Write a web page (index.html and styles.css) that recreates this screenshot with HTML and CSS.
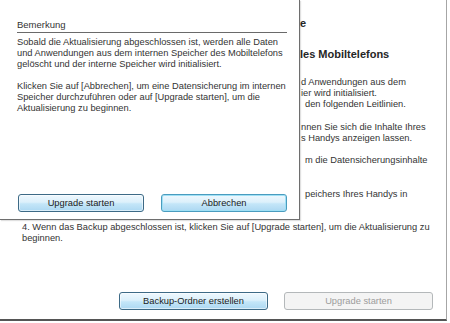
FILE: index.html
```html
<!DOCTYPE html>
<html lang="de">
<head>
<meta charset="utf-8">
<title>Upgrade</title>
<link rel="stylesheet" href="styles.css">
</head>
<body>
<div class="window">
  <div class="bg">
    <div class="title frag-t">e</div>
    <div class="heading frag-t">les Mobiltelefons</div>
    <div class="lines">
      <div class="frag">d Anwendungen aus dem</div>
      <div class="frag">ier wird initialisiert.</div>
      <div class="frag frag-in">den folgenden Leitlinien.</div>
      <div class="blank">&nbsp;</div>
      <div class="frag">nnen Sie sich die Inhalte Ihres</div>
      <div class="frag">s Handys anzeigen lassen.</div>
      <div class="blank">&nbsp;</div>
      <div class="frag frag-in">m die Datensicherungsinhalte</div>
      <div class="blank">&nbsp;</div>
      <div class="blank">&nbsp;</div>
      <div class="frag frag-in">peichers Ihres Handys in</div>
      <div class="blank">&nbsp;</div>
      <div class="blank">&nbsp;</div>
      <div class="line">4. Wenn das Backup abgeschlossen ist, klicken Sie auf [Upgrade starten], um die Aktualisierung zu</div>
      <div class="line">beginnen.</div>
    </div>
  </div>
  <div class="actions">
    <button class="btn btn-blue btn-wide">Backup-Ordner erstellen</button>
    <button class="btn btn-disabled btn-wide" disabled>Upgrade starten</button>
  </div>

  <div class="dialog">
    <div class="dlg-title">Bemerkung</div>
    <p class="dlg-text">Sobald die Aktualisierung abgeschlossen ist, werden alle Daten<br>und Anwendungen aus dem internen Speicher des Mobiltelefons<br>gelöscht und der interne Speicher wird initialisiert.</p>
    <p class="dlg-text dlg-gap">Klicken Sie auf [Abbrechen], um eine Datensicherung im internen<br>Speicher durchzuführen oder auf [Upgrade starten], um die<br>Aktualisierung zu beginnen.</p>
    <div class="dlg-actions">
      <button class="btn btn-blue btn-dlg">Upgrade starten</button>
      <button class="btn btn-blue btn-focus btn-dlg">Abbrechen</button>
    </div>
  </div>
</div>
</body>
</html>
```

FILE: styles.css
```css
html, body {
  margin: 0;
  padding: 0;
  background: #ffffff;
}
body {
  width: 450px;
  height: 323px;
  overflow: hidden;
  font-family: "Liberation Sans", Arial, sans-serif;
  color: #333333;
}
.window {
  position: relative;
  box-sizing: border-box;
  width: 447px;
  height: 321px;
  border-right: 1px solid #a6a6a6;
  border-bottom: 2px solid #555555;
  display: flex;
  flex-direction: column;
  background: #ffffff;
}
.bg {
  padding: 16px 0 0 22px;
}
.title, .heading {
  font-weight: bold;
  font-size: 11px;
  line-height: 14px;
  color: #262626;
  white-space: nowrap;
}
.heading {
  margin-top: 17px;
}
.frag-t {
  padding-left: 278px;
}
.lines {
  margin-top: 16px;
  font-size: 9.3px;
  line-height: 11.15px;
  white-space: nowrap;
}
.frag {
  padding-left: 279px;
}
.frag-in {
  padding-left: 283px;
}
.actions {
  margin-top: auto;
  display: flex;
  justify-content: flex-end;
  gap: 16px;
  padding: 0 13px 9px 0;
}
.btn {
  box-sizing: border-box;
  height: 18px;
  padding: 0;
  margin: 0;
  font-family: "Liberation Sans", Arial, sans-serif;
  font-size: 9.3px;
  color: #1b1b1b;
  border-radius: 3px;
  line-height: 16px;
  text-align: center;
}
.btn-wide {
  width: 149px;
}
.btn-dlg {
  width: 126px;
}
.btn-blue {
  border: 1px solid #3d6a86;
  background: linear-gradient(#eef8fe 0%, #dcf0fb 45%, #c4e6f8 55%, #acd8f2 100%);
  box-shadow: inset 0 0 0 1px rgba(255, 255, 255, 0.55);
}
.btn-focus {
  border-color: #4a9cbf;
  box-shadow: inset 0 0 0 1px #9fe0f5;
}
.btn-disabled {
  border: 1px solid #b4b8ba;
  background: #f4f4f4;
  color: #9c9c9c;
}
.dialog {
  position: absolute;
  top: 0;
  left: 0;
  box-sizing: border-box;
  width: 300px;
  height: 220px;
  background: #ffffff;
  border-right: 1px solid #6e6e6e;
  border-bottom: 1px solid #6e6e6e;
  box-shadow: 1px 1px 1px rgba(0, 0, 0, 0.12);
  padding: 0 12px 7px 17px;
  display: flex;
  flex-direction: column;
}
.dlg-title {
  padding-top: 19px;
  padding-bottom: 2px;
  font-size: 9.5px;
  line-height: 11px;
  color: #333333;
  border-bottom: 1px solid #6a6a6a;
}
.dlg-text {
  margin: 4px 0 0;
  font-size: 9.3px;
  line-height: 11px;
  white-space: nowrap;
  color: #333333;
}
.dlg-gap {
  margin-top: 11px;
}
.dlg-actions {
  margin-top: auto;
  display: flex;
  gap: 17px;
  padding-left: 1px;
}
```
